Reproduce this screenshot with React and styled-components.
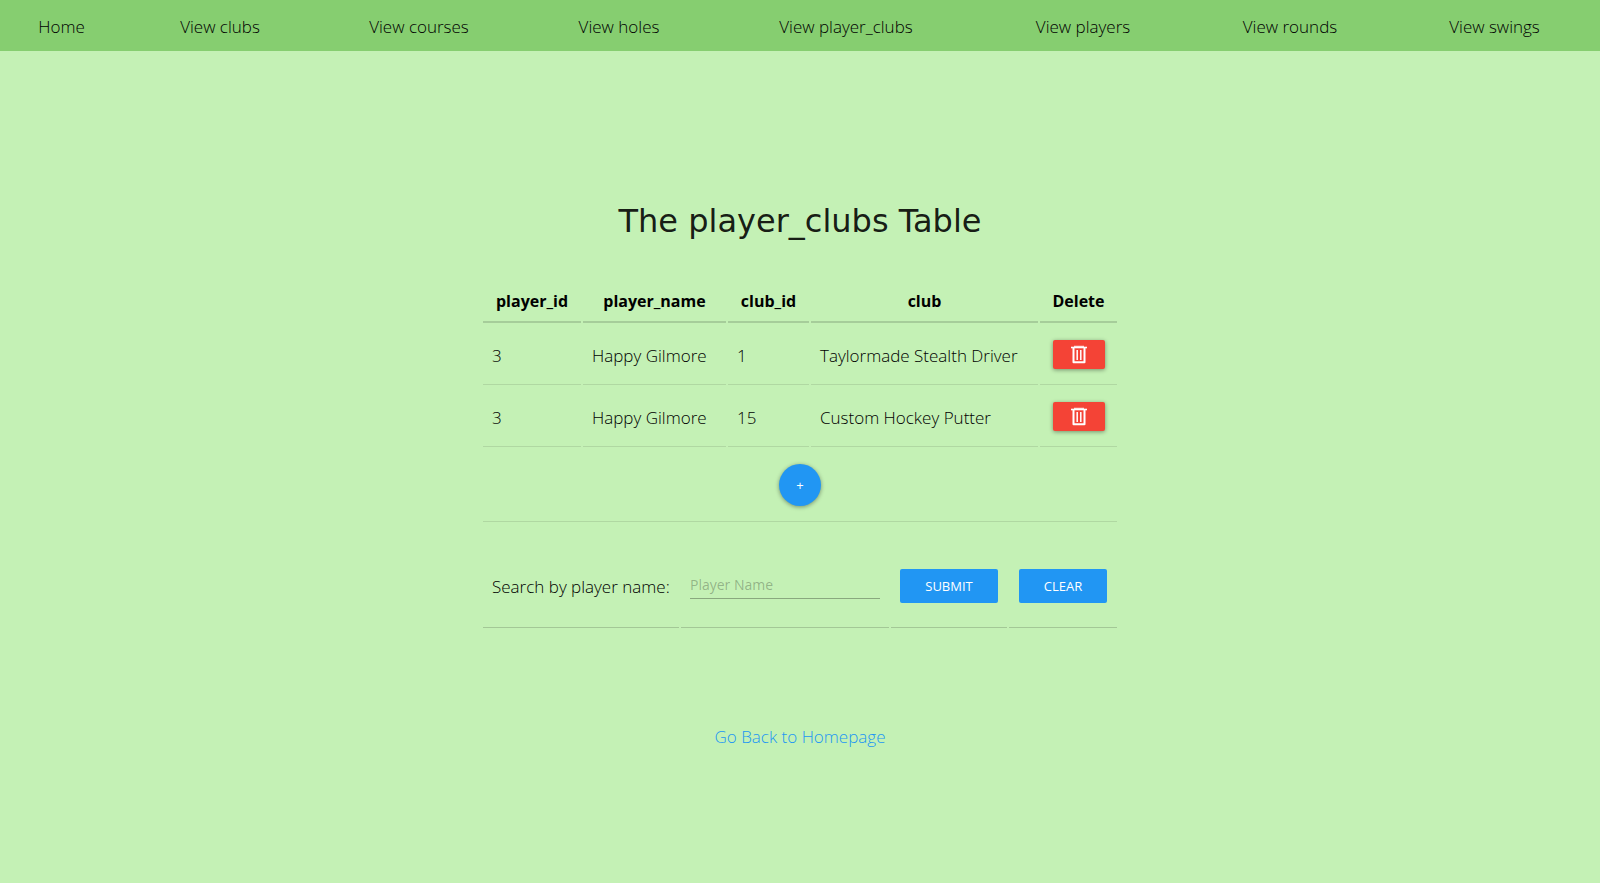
import React from "react";
import styled, { createGlobalStyle } from "styled-components";

const GlobalStyle = createGlobalStyle`
  * { box-sizing: border-box; }
  body {
    margin: 0;
    background: #c4f1b5;
    color: #000;
    font: 300 17px/24px "Open Sans", sans-serif;
  }
`;

const Nav = styled.nav`
  display: grid;
  grid-template-columns: 123fr 194fr 204fr 196fr 258fr 216fr 198fr 211fr;
  padding: 15px 0 12px;
  background: #86ce70;
  font-weight: 340;
`;

const NavLink = styled.a`
  color: #000;
  text-align: center;
  text-decoration: none;
  white-space: nowrap;
`;

const Main = styled.main`
  display: flex;
  flex-direction: column;
  align-items: center;
  padding: 146px 16px 48px;
`;

const Title = styled.h1`
  margin: 0 0 32px;
  font: 400 32px/48px Verdana, "DejaVu Sans", sans-serif;
  color: rgba(0, 0, 0, 0.9);
`;

const Table = styled.table`
  width: 638px;
  table-layout: fixed;
  border-collapse: separate;
  border-spacing: 2px 0;
`;

const HeadCell = styled.th`
  width: ${(p) => p.$width}px;
  height: 46px;
  padding: 7px 0 3px;
  border-bottom: 2px solid rgba(0, 0, 0, 0.15);
  font-size: 16px;
  font-weight: 700;
  text-align: center;
`;

const Cell = styled.td`
  height: ${(p) => (p.$tall ? 75 : 62)}px;
  padding: ${(p) => (p.$center ? "2px 0 0" : "4px 0 0 9px")};
  border-bottom: 1px solid rgba(0, 0, 0, 0.1);
  text-align: ${(p) => (p.$center ? "center" : "left")};
  white-space: nowrap;
`;

const DeleteButton = styled.button`
  display: block;
  width: 52px;
  height: 29px;
  margin: 0 auto;
  padding: 0;
  border: 0;
  border-radius: 2px;
  background: #f44336;
  color: #fff;
  box-shadow: 0 1px 4px rgba(0, 0, 0, 0.4);
  svg { display: block; margin: 0 auto; }
`;

const AddButton = styled.button`
  display: block;
  width: 42px;
  height: 42px;
  margin: 0 auto;
  padding: 0;
  border: 0;
  border-radius: 50%;
  background: #2196f3;
  color: #fff;
  font: 13px/42px "Open Sans", sans-serif;
  box-shadow: 0 1px 4px rgba(0, 0, 0, 0.4);
`;

const SearchForm = styled.form`
  display: grid;
  grid-template-columns: 196fr 208fr 116fr 108fr;
  gap: 2px;
  width: 634px;
  margin-top: 22px;
`;

const SearchCell = styled.div`
  min-width: 0;
  display: flex;
  align-items: center;
  justify-content: ${(p) => (p.$start ? "flex-start" : "center")};
  height: 84px;
  padding: ${(p) => (p.$start ? "2px 0 0 9px" : "0")};
  border-bottom: 1px solid rgba(0, 0, 0, 0.17);
  white-space: nowrap;
`;

const TextInput = styled.input`
  width: 190px;
  height: 28px;
  margin: 0 0 2px;
  padding: 0;
  border: 0;
  border-bottom: 1px solid rgba(0, 0, 0, 0.3);
  background: transparent;
  font: 14px/24px "Open Sans", sans-serif;
  &::placeholder { color: rgba(0, 0, 0, 0.27); opacity: 1; }
`;

const ActionButton = styled.button`
  height: 34px;
  padding: 0 25px;
  border: 0;
  border-radius: 2px;
  background: #2196f3;
  color: #fff;
  font: 13px/20px "Open Sans", sans-serif;
  text-transform: uppercase;
`;

const HomeLink = styled.a`
  margin-top: 97px;
  color: #2196f3;
  font-weight: 340;
  text-decoration: none;
`;

const TrashIcon = () => (
  <svg width="18" height="19" viewBox="0 0 18 19" fill="none" stroke="currentColor" aria-hidden="true">
    <path d="M1 2.5H17" strokeWidth="1.6" />
    <path d="M4 1.3H14" strokeWidth="1" />
    <path d="M3.5 2.5V17.2H14.5V2.5" strokeWidth="2" strokeLinejoin="round" />
    <path d="M7.2 5V15M10.8 5V15" strokeWidth="1.5" />
  </svg>
);

const navItems = [
  "Home", "View clubs", "View courses", "View holes",
  "View player_clubs", "View players", "View rounds", "View swings",
];

const columns = [
  ["player_id", 98], ["player_name", 143], ["club_id", 81], ["club", 227], ["Delete", 77],
];

const rows = [
  [3, "Happy Gilmore", 1, "Taylormade Stealth Driver"],
  [3, "Happy Gilmore", 15, "Custom Hockey Putter"],
];

export default function App() {
  return (
    <>
      <GlobalStyle />
      <Nav>
        {navItems.map((item) => <NavLink key={item} href="#">{item}</NavLink>)}
      </Nav>
      <Main>
        <Title>The player_clubs Table</Title>
        <Table>
          <thead>
            <tr>
              {columns.map(([name, width]) => <HeadCell key={name} $width={width} scope="col">{name}</HeadCell>)}
            </tr>
          </thead>
          <tbody>
            {rows.map((row) => (
              <tr key={row[2]}>
                {row.map((value, i) => <Cell key={i}>{value}</Cell>)}
                <Cell $center>
                  <DeleteButton type="button" aria-label="Delete"><TrashIcon /></DeleteButton>
                </Cell>
              </tr>
            ))}
            <tr>
              <Cell $tall $center colSpan={5}>
                <AddButton type="button">+</AddButton>
              </Cell>
            </tr>
          </tbody>
        </Table>
        <SearchForm onSubmit={(e) => e.preventDefault()}>
          <SearchCell $start>
            <label htmlFor="player-name">Search by player name:</label>
          </SearchCell>
          <SearchCell>
            <TextInput id="player-name" type="text" placeholder="Player Name" />
          </SearchCell>
          <SearchCell>
            <ActionButton type="submit">Submit</ActionButton>
          </SearchCell>
          <SearchCell>
            <ActionButton type="reset">Clear</ActionButton>
          </SearchCell>
        </SearchForm>
        <HomeLink href="#">Go Back to Homepage</HomeLink>
      </Main>
    </>
  );
}
